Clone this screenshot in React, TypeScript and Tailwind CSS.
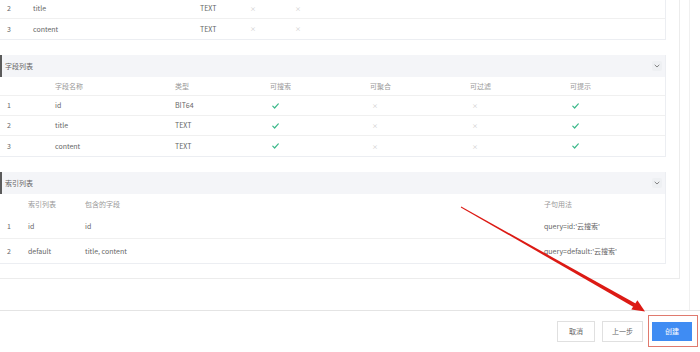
import React from "react";

const Check = () => (
  <svg width="7" height="6" viewBox="0 0 7 6" className="block">
    <path d="M0.8 3.2 L2.6 5 L6.3 0.9" fill="none" stroke="#3cb98a" strokeWidth="1.2" strokeLinecap="round" strokeLinejoin="round" />
  </svg>
);
const X = () => <span className="text-[6px] text-[#c8c8c8] leading-none">×</span>;

const Chevron = () => (
  <div className="w-[10px] h-[10px] flex items-center justify-center rounded-[2px] bg-[#eef0f3]">
    <svg width="6" height="4" viewBox="0 0 6 4">
      <path d="M0.7 0.8 L3 3 L5.3 0.8" fill="none" stroke="#777" strokeWidth="0.9" />
    </svg>
  </div>
);

const SectionHeader = ({ title }: { title: string }) => (
  <div className="h-[22px] bg-[#f4f5f8] border-l-2 border-[#5b5b5b] flex items-center justify-between pl-[3px] pr-[3px] text-[#666]">
    <span>{title}</span>
    <Chevron />
  </div>
);

export default function App() {
  const fieldCols = "grid grid-cols-[48px_120px_95px_100px_100px_100px_1fr] pl-[7px] items-center";
  const fields: [string, string, string, boolean, boolean, boolean, boolean][] = [
    ["1", "id", "BIT64", true, false, false, true],
    ["2", "title", "TEXT", true, false, false, true],
    ["3", "content", "TEXT", true, false, false, true],
  ];
  const idxCols = "grid grid-cols-[21px_57px_459px_1fr] pl-[7px] items-center";
  const topCols = "grid grid-cols-[26px_167px_50px_45px_1fr] pl-[7px] items-center";

  return (
    <div className="w-[700px] h-[352px] bg-white relative overflow-hidden font-['Noto_Sans_CJK_SC','Noto_Sans',sans-serif] text-[7px] text-[#666]">
      <div className="h-[311px] border-b border-[#e4e4e4] flex">
        <div className="w-[680px] h-[279px] border-r border-b border-[#ececec] overflow-hidden">
          <div className="w-[666px] flex flex-col">
            {/* top partial table */}
            <div className="mt-[-1px] border-r border-b border-[#eceef2]">
              <div className={`${topCols} h-[20px] border-b border-[#f0f0f0]`}>
                <span>2</span><span>title</span><span>TEXT</span><X /><X />
              </div>
              <div className={`${topCols} h-[20px]`}>
                <span>3</span><span>content</span><span>TEXT</span><X /><X />
              </div>
            </div>

            {/* 字段列表 */}
            <div className="mt-[15px] border-r border-b border-[#eceef2]">
              <SectionHeader title="字段列表" />
              <div className={`${fieldCols} h-[19px] text-[#999] border-b border-[#f0f0f0]`}>
                <span></span><span>字段名称</span><span>类型</span><span>可搜索</span><span>可聚合</span><span>可过滤</span><span>可提示</span>
              </div>
              {fields.map((f, i) => (
                <div key={f[0]} className={`${fieldCols} h-[20px] ${i < 2 ? "border-b border-[#f0f0f0]" : ""}`}>
                  <span>{f[0]}</span>
                  <span>{f[1]}</span>
                  <span>{f[2]}</span>
                  <span className="pl-[2px]">{f[3] ? <Check /> : <X />}</span>
                  <span className="pl-[2px]">{f[4] ? <Check /> : <X />}</span>
                  <span className="pl-[2px]">{f[5] ? <Check /> : <X />}</span>
                  <span className="pl-[2px]">{f[6] ? <Check /> : <X />}</span>
                </div>
              ))}
            </div>

            {/* 索引列表 */}
            <div className="mt-[15px] border-r border-b border-[#eceef2]">
              <SectionHeader title="索引列表" />
              <div className={`${idxCols} h-[21px] text-[#999]`}>
                <span></span><span>索引列表</span><span>包含的字段</span><span>子句用法</span>
              </div>
              <div className={`${idxCols} h-[24px] border-b border-[#f0f0f0]`}>
                <span>1</span><span>id</span><span>id</span><span>query=id:'云搜索'</span>
              </div>
              <div className={`${idxCols} h-[24px]`}>
                <span>2</span><span>default</span><span>title, content</span><span>query=default:'云搜索'</span>
              </div>
            </div>
          </div>
        </div>
        <div className="w-[10px] border-r border-[#f0f0f0]" />
      </div>

      {/* footer */}
      <div className="h-[41px] flex items-center justify-end pr-[8px]">
        <button className="w-[38px] h-[21px] border border-[#e0e0e0] bg-white text-[#666] text-[7px] mr-[7px]">取消</button>
        <button className="w-[41px] h-[21px] border border-[#e0e0e0] bg-white text-[#666] text-[7px] mr-[9px]">上一步</button>
        <button className="w-[40px] h-[19px] bg-[#3f8cf3] text-white text-[7px]">创建</button>
      </div>

      {/* red highlight box */}
      <div className="absolute left-[648px] top-[315px] w-[50px] h-[32px] border border-[#e07a6e]" />

      {/* red arrow */}
      <svg className="absolute left-0 top-0 pointer-events-none" width="700" height="352">
        <polygon points="461.2,206.6 460.8,207.4 633.6,306.9 635.6,303.5" fill="#dc1a14" />
        <polygon points="645,311.5 631.3,309.6 637.4,300.2" fill="#dc1a14" />
      </svg>
    </div>
  );
}
